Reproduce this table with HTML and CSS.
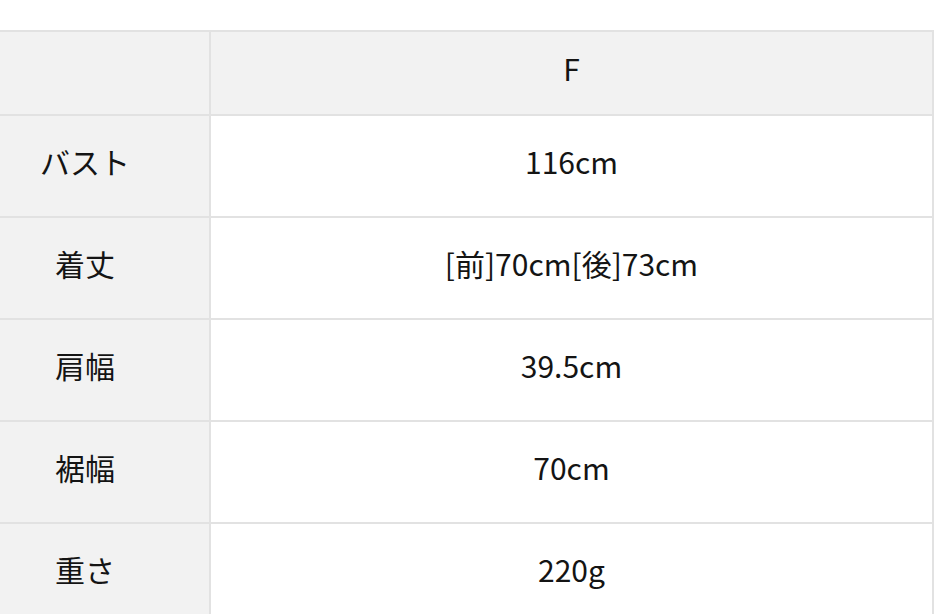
FILE: index.html
```html
<!DOCTYPE html>
<html lang="ja">
<head>
<meta charset="utf-8">
<link rel="stylesheet" href="styles.css">
</head>
<body>
<table class="size-table">
  <tr class="head-row">
    <th class="label"></th>
    <th class="value head">F</th>
  </tr>
  <tr>
    <th class="label">バスト</th>
    <td class="value">116cm</td>
  </tr>
  <tr>
    <th class="label">着丈</th>
    <td class="value">[前]70cm[後]73cm</td>
  </tr>
  <tr>
    <th class="label">肩幅</th>
    <td class="value">39.5cm</td>
  </tr>
  <tr>
    <th class="label">裾幅</th>
    <td class="value">70cm</td>
  </tr>
  <tr>
    <th class="label">重さ</th>
    <td class="value">220g</td>
  </tr>
</table>
</body>
</html>
```
FILE: styles.css
```css
html, body {
  margin: 0;
  padding: 0;
  background: #ffffff;
  overflow: hidden;
}
body {
  font-family: "Noto Sans CJK JP", "Noto Sans", sans-serif;
  color: #141414;
}
.size-table {
  margin: 30px 0 0 -41px;
  width: 975px;
  border-collapse: collapse;
  table-layout: fixed;
}
.size-table th,
.size-table td {
  border: 2px solid #e2e2e2;
  font-size: 30px;
  font-weight: 400;
  text-align: center;
  vertical-align: middle;
  padding: 0 0 10px;
  line-height: 1.2;
}
.size-table tr {
  height: 102px;
}
.size-table tr.head-row {
  height: 84px;
}
.label {
  width: 248px;
  background: #f2f2f2;
}
.value {
  background: #ffffff;
}
.value.head {
  background: #f2f2f2;
}
```
